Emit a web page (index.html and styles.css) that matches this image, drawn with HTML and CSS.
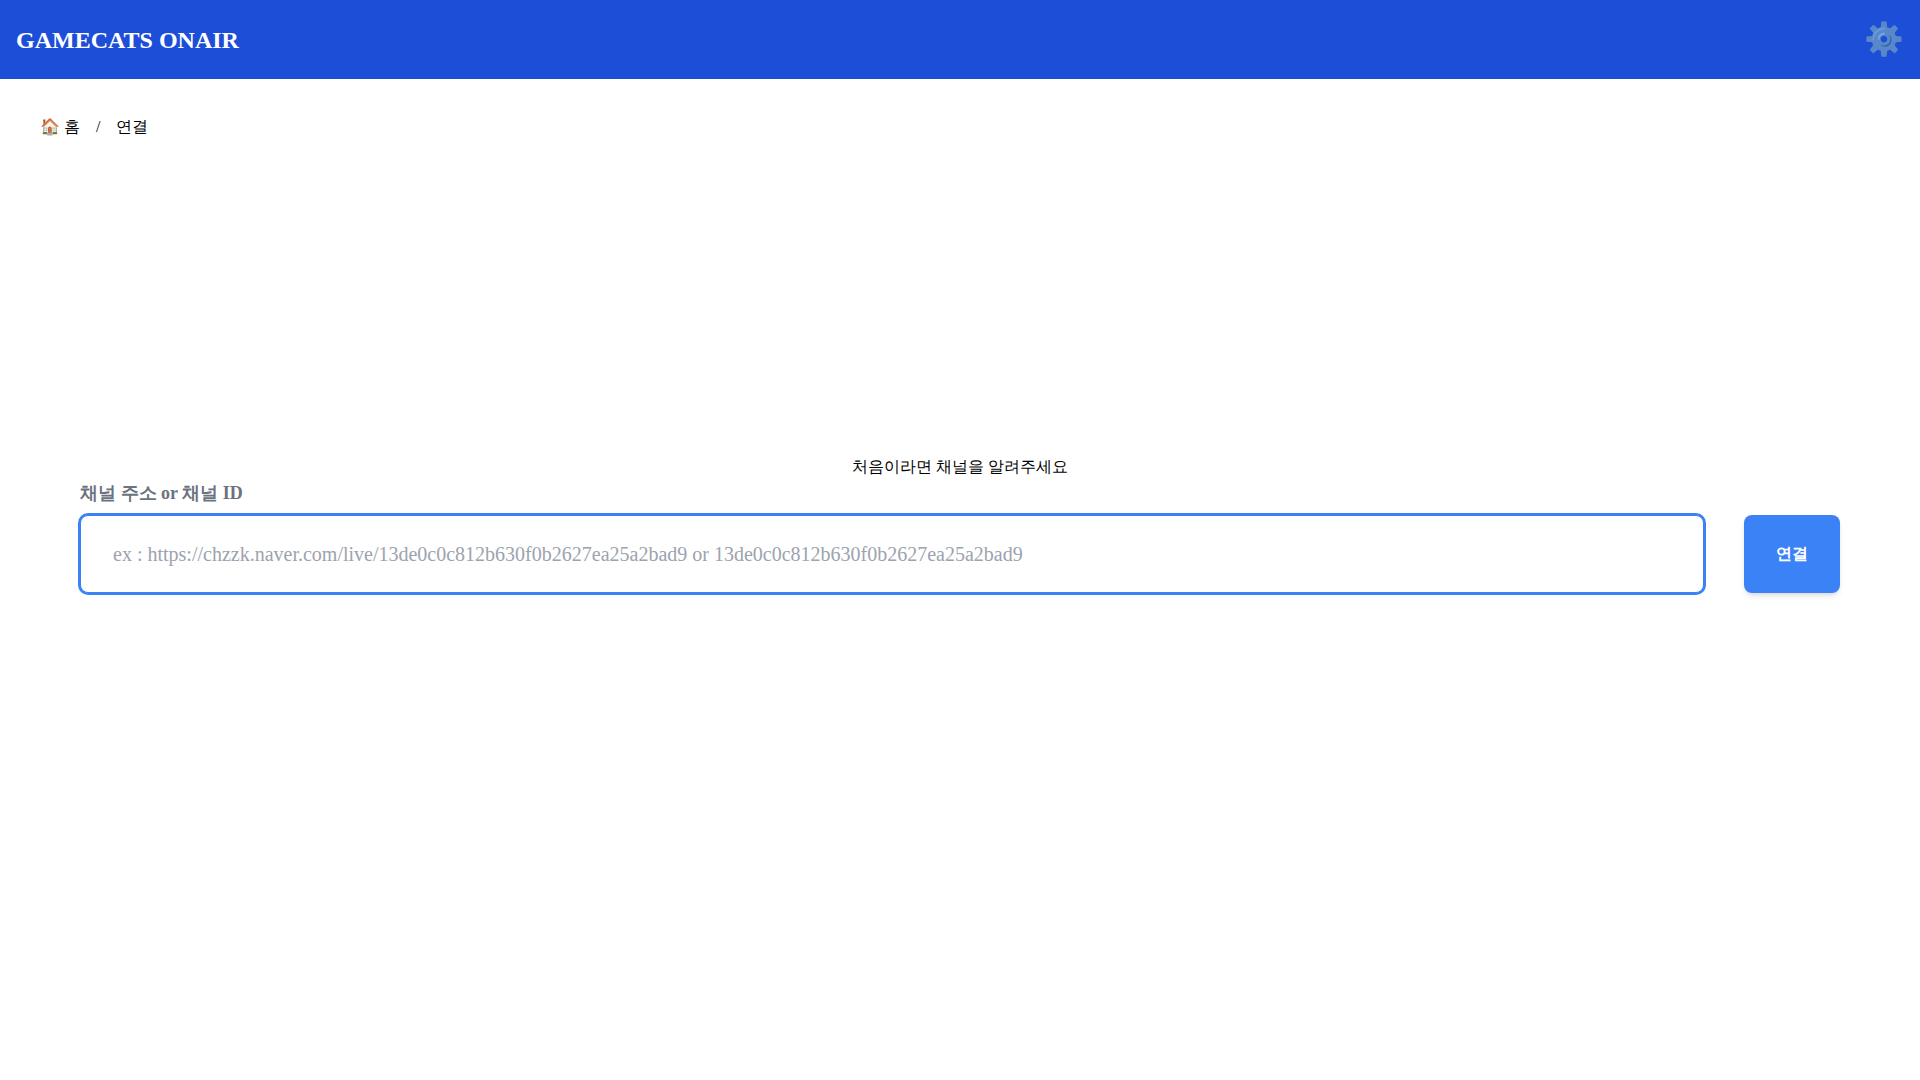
FILE: index.html
```html
<!DOCTYPE html>
<html lang="ko">
<head>
<meta charset="utf-8">
<title>GAMECATS ONAIR</title>
<link rel="stylesheet" href="styles.css">
</head>
<body>
<header class="topbar">
  <h1 class="brand">GAMECATS ONAIR</h1>
  <button class="settings" type="button" aria-label="설정">⚙️</button>
</header>
<nav class="crumbs">
  <a href="#">🏠 홈</a>
  <span>/</span>
  <a href="#">연결</a>
</nav>
<main class="main">
  <p class="intro">처음이라면 채널을 알려주세요</p>
  <form class="connect">
    <div class="field">
      <label class="label" for="channel">채널 주소 or 채널 ID</label>
      <input class="input" id="channel" type="text" placeholder="ex : https://chzzk.naver.com/live/13de0c0c812b630f0b2627ea25a2bad9 or 13de0c0c812b630f0b2627ea25a2bad9">
    </div>
    <button class="submit" type="button">연결</button>
  </form>
</main>
</body>
</html>
```
FILE: styles.css
```css
* { box-sizing: border-box; margin: 0; padding: 0; }
body {
  display: flex;
  flex-direction: column;
  min-height: 100vh;
  font: 16px/24px "Liberation Serif", serif;
  color: #000;
  background: #fff;
}
button, input { font: inherit; border: 0; }
a { color: inherit; text-decoration: none; }
.topbar {
  display: flex;
  align-items: center;
  justify-content: space-between;
  height: 79px;
  padding: 0 16px;
  color: #fff;
  background: #1d4ed8;
}
.brand { font-size: 24px; line-height: 32px; }
.settings { padding-bottom: 2px; font-size: 32px; line-height: 36px; background: none; opacity: 0.6; }
.crumbs { display: flex; gap: 16px; padding: 36px 40px; }
.main {
  flex: 1;
  display: flex;
  flex-direction: column;
  justify-content: center;
  padding: 0 80px 208px;
}
.intro { text-align: center; }
.connect { display: flex; align-items: flex-end; gap: 40px; }
.field { flex: 1; display: flex; flex-direction: column; gap: 8px; }
.label { font-size: 18px; line-height: 28px; font-weight: 700; color: #6b7280; }
.input {
  width: 100%;
  height: 78px;
  padding: 2px 32px 0;
  font-size: 20px;
  border: 1px solid #3b82f6;
  border-radius: 8px;
  outline: 0;
  box-shadow: 0 0 0 2px #3b82f6;
}
.input::placeholder { color: #9ca3af; }
.submit {
  width: 96px;
  height: 78px;
  font-weight: 700;
  color: #fff;
  background: #3b82f6;
  border-radius: 8px;
  box-shadow: 0 4px 6px -1px rgb(0 0 0 / 10%), 0 2px 4px -2px rgb(0 0 0 / 10%);
}
```
